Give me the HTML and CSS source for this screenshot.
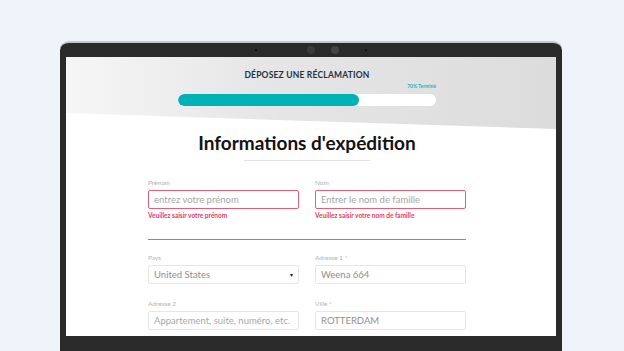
FILE: index.html
```html
<!DOCTYPE html>
<html lang="fr">

<head>
    <meta charset="UTF-8">
    <meta name="viewport" content="width=device-width, initial-scale=1.0">
    <title>Déposez une réclamation</title>
    <link rel="stylesheet" href="styles.css">
</head>

<body>
    <div class="stage">
        <div class="laptop">
            <div class="bezel-top">
                <span class="dot"></span>
                <span class="cam"></span>
                <span class="cam cam2"></span>
                <span class="dot"></span>
            </div>
            <div class="screen">
                <div class="hero">
                    <div class="column">
                        <h2 class="claim-title">DÉPOSEZ UNE RÉCLAMATION</h2>
                        <div class="progress-wrap">
                            <div class="progress-label">70% Terminé</div>
                            <div class="progress">
                                <div class="progress-fill" style="width: 70%"></div>
                            </div>
                        </div>
                    </div>
                </div>

                <div class="column">
                    <h1 class="heading">Informations d'expédition</h1>
                    <div class="heading-line"></div>

                    <div class="form-row row-first">
                        <div class="field">
                            <label>Prénom</label>
                            <div class="input error">entrez votre prénom</div>
                            <div class="error-text">Veuillez saisir votre prénom</div>
                        </div>
                        <div class="field">
                            <label>Nom</label>
                            <div class="input error">Entrer le nom de famille</div>
                            <div class="error-text">Veuillez saisir votre nom de famille</div>
                        </div>
                    </div>

                    <div class="separator"></div>

                    <div class="form-row">
                        <div class="field">
                            <label>Pays</label>
                            <div class="input select">United States <span class="arrow">▾</span></div>
                        </div>
                        <div class="field">
                            <label>Adresse 1 *</label>
                            <div class="input">Weena 664</div>
                        </div>
                    </div>

                    <div class="form-row row-last">
                        <div class="field">
                            <label>Adresse 2</label>
                            <div class="input placeholder">Appartement, suite, numéro, etc.</div>
                        </div>
                        <div class="field">
                            <label>Ville *</label>
                            <div class="input">ROTTERDAM</div>
                        </div>
                    </div>
                </div>
            </div>
        </div>
    </div>
</body>

</html>
```

FILE: styles.css
```css
* {
    padding: 0;
    margin: 0;
    box-sizing: border-box;
}

body {
    background-color: #eef4f9;
    font-family: Lato, "Noto Sans", sans-serif;
    overflow: hidden;
}

.stage {
    padding-top: 41px;
    padding-left: 60px;
}

.laptop {
    width: 502px;
    height: 310px;
    background-color: #2a2a2a;
    border-top: 2px solid #c8c8c8;
    border-radius: 9px 9px 0 0;
    padding: 0 6px;
}

.bezel-top {
    height: 14px;
    display: flex;
    align-items: center;
    justify-content: center;
}

.dot {
    width: 2px;
    height: 2px;
    background-color: #111;
}

.cam {
    width: 8px;
    height: 8px;
    border-radius: 50%;
    background-color: #3c3c3c;
    margin-left: 50px;
}

.cam2 {
    background-color: #444;
    margin-left: 16px;
    margin-right: 26px;
}

.screen {
    height: 279px;
    background-color: #fff;
    overflow: hidden;
}

.hero {
    height: 72px;
    background: linear-gradient(90deg, #f6f6f6 0%, #e6e6e6 40%, #dcdcdc 100%);
    clip-path: polygon(0 0, 100% 0, 100% 100%, 0 56px);
    padding-top: 12px;
}

.column {
    width: 318px;
    margin-left: 82px;
}

.claim-title {
    text-align: center;
    font-size: 8.5px;
    font-weight: 700;
    color: #1d3347;
    letter-spacing: 0.2px;
    line-height: 12px;
}

.progress-wrap {
    width: 258px;
    margin: 0 auto;
}

.progress-label {
    text-align: right;
    font-size: 5px;
    font-weight: 700;
    color: #27b3bb;
    line-height: 8px;
    margin-top: 1px;
}

.progress {
    height: 12px;
    margin-top: 4px;
    background-color: #fff;
    border-radius: 6px;
    overflow: hidden;
}

.progress-fill {
    height: 100%;
    background-color: #00b1b6;
    border-radius: 6px;
}

.heading {
    text-align: center;
    font-size: 19px;
    font-weight: 700;
    color: #121212;
    line-height: 24px;
    margin-top: 2px;
}

.heading-line {
    width: 126px;
    height: 1px;
    margin: 5px auto 0;
    background-color: #e2e2e2;
}

.form-row {
    display: grid;
    grid-template-columns: 151px 151px;
    gap: 16px;
}

.row-first {
    margin-top: 17px;
}

.field label {
    display: block;
    font-size: 6.5px;
    color: #b3b3b3;
    line-height: 9px;
}

.input {
    height: 19px;
    margin-top: 3px;
    padding-left: 5px;
    border: 1px solid #e6e6e6;
    border-radius: 2px;
    font-size: 9.5px;
    line-height: 17px;
    color: #8f8f8f;
    white-space: nowrap;
    overflow: hidden;
}

.input.error {
    border-color: #df6079;
    color: #a6a6a6;
}

.placeholder {
    color: #a8a8a8;
}

.select {
    display: flex;
    justify-content: space-between;
    padding-right: 5px;
}

.arrow {
    font-size: 6px;
    color: #222;
}

.error-text {
    font-size: 6.5px;
    font-weight: 700;
    color: #e33a62;
    line-height: 9px;
    margin-top: 2px;
}

.separator {
    height: 1px;
    margin-top: 19px;
    margin-bottom: 13px;
    background-color: #8c8c8c;
}

.row-last {
    margin-top: 15px;
}
```
